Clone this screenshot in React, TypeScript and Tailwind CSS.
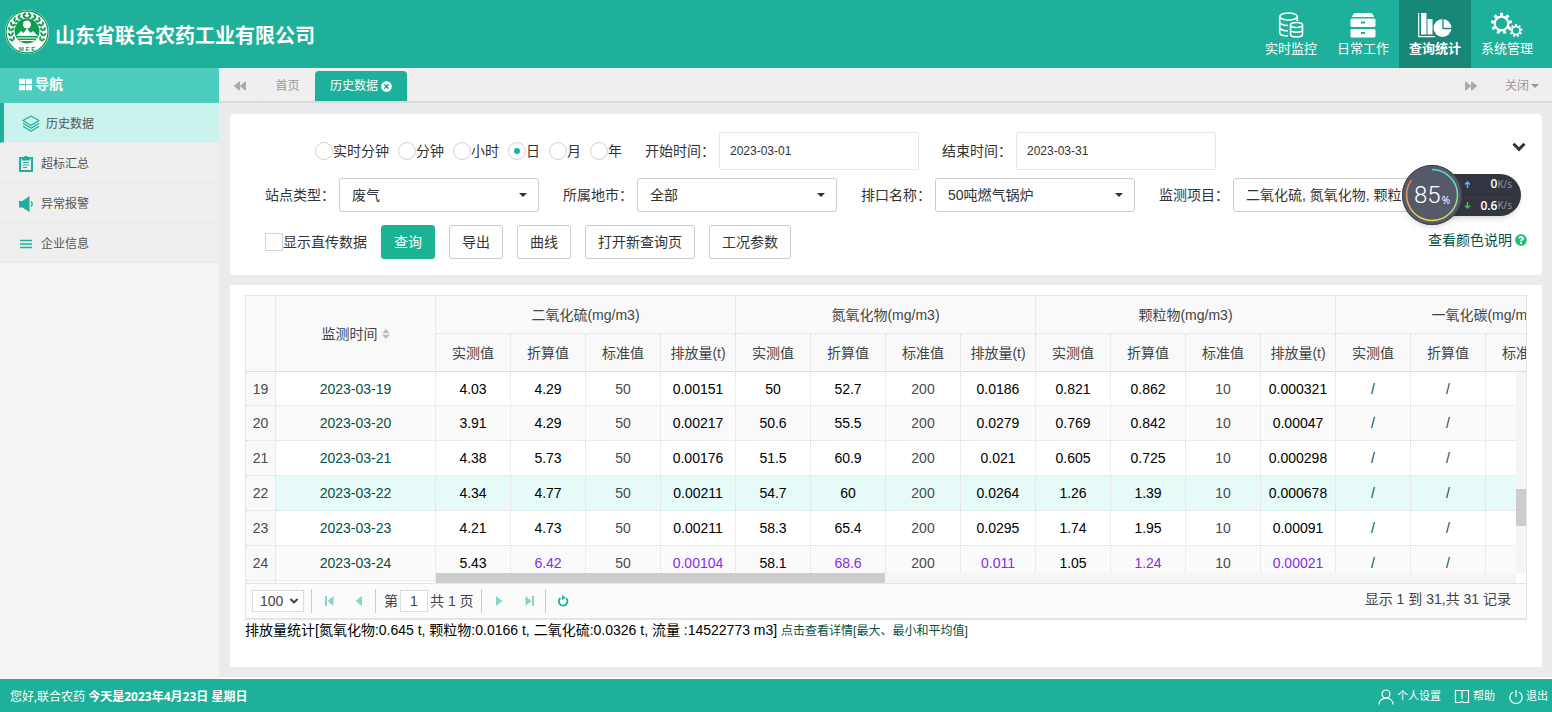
import React from 'react';
import { FaBackward, FaForward, FaTimesCircle, FaQuestionCircle, FaThLarge } from 'react-icons/fa';
import { ChevronDown } from 'lucide-react';

const GROUPS = ['二氧化硫(mg/m3)', '氮氧化物(mg/m3)', '颗粒物(mg/m3)', '一氧化碳(mg/m3)'];
const SUB_COLUMNS = ['实测值', '折算值', '标准值', '排放量(t)'];

type Row = { no: number; date: string; values: string[]; hover?: boolean; mark?: boolean };

const ROWS: Row[] = [
  { no: 19, date: '2023-03-19', values: ['4.03', '4.29', '50', '0.00151', '50', '52.7', '200', '0.0186', '0.821', '0.862', '10', '0.000321'] },
  { no: 20, date: '2023-03-20', values: ['3.91', '4.29', '50', '0.00217', '50.6', '55.5', '200', '0.0279', '0.769', '0.842', '10', '0.00047'] },
  { no: 21, date: '2023-03-21', values: ['4.38', '5.73', '50', '0.00176', '51.5', '60.9', '200', '0.021', '0.605', '0.725', '10', '0.000298'] },
  { no: 22, date: '2023-03-22', values: ['4.34', '4.77', '50', '0.00211', '54.7', '60', '200', '0.0264', '1.26', '1.39', '10', '0.000678'], hover: true },
  { no: 23, date: '2023-03-23', values: ['4.21', '4.73', '50', '0.00211', '58.3', '65.4', '200', '0.0295', '1.74', '1.95', '10', '0.00091'] },
  { no: 24, date: '2023-03-24', values: ['5.43', '6.42', '50', '0.00104', '58.1', '68.6', '200', '0.011', '1.05', '1.24', '10', '0.00021'], mark: true },
];

const rowBg = (row: Row) => {
  if (row.hover) return 'bg-[#e6faf8]';
  return row.no % 2 ? 'bg-white' : 'bg-[#fafafa]';
};

// Standard values are grey, corrected values and totals of a marked row are purple
const valueColor = (row: Row, i: number) => {
  if (i % 4 === 2) return 'text-[#4a4a4a]';
  if (row.mark && i % 4 !== 0) return 'text-[#8a2be2]';
  return 'text-black';
};

/* ---------- icons ---------- */

const Emblem = () => (
  <svg width="44" height="44" viewBox="0 0 44 44" aria-hidden="true">
    <circle cx="22" cy="22" r="22" fill="#fff" />
    <circle cx="22" cy="22" r="21" fill="none" stroke="#12984f" strokeWidth="1.3" />
    <circle cx="22" cy="21" r="12.5" fill="#0f9d4f" />
    {[-28, -10, 8, 26, 44, 62, 80].map((a) => (
      <g key={a} fill="#12984f">
        <ellipse cx="4.200" cy="21.500" rx="1.100" ry="2.300" transform={`rotate(${a} 22 22) rotate(-30 4.200 21.500)`} />
        <ellipse cx="7.200" cy="21.500" rx="1.100" ry="2.300" transform={`rotate(${a} 22 22) rotate(35 7.200 21.500)`} />
        <ellipse cx="39.800" cy="21.500" rx="1.100" ry="2.300" transform={`rotate(${-a} 22 22) rotate(30 39.800 21.500)`} />
        <ellipse cx="36.800" cy="21.500" rx="1.100" ry="2.300" transform={`rotate(${-a} 22 22) rotate(-35 36.800 21.500)`} />
      </g>
    ))}
    <circle cx="22" cy="14.500" r="3.900" fill="#fff" />
    <path d="M11 26l5-5 2.500 2L22 18.500l3.500 4.500 2.500-2 5 5z" fill="#fff" />
    <path d="M12.500 28h19M15 30.500h14" stroke="#fff" strokeWidth="1.100" />
    <text x="22" y="40.500" textAnchor="middle" fontSize="6" fontWeight="700" fill="#12984f" fontFamily="Liberation Sans">M E E</text>
  </svg>
);

const MonitorIcon = () => (
  <svg width="26" height="26" viewBox="0 0 26 26" fill="none" stroke="currentColor" strokeWidth="1.6" aria-hidden="true">
    <ellipse cx="10.500" cy="4.500" rx="8.800" ry="3.500" />
    <path d="M1.700 4.500v16c0 2 3.500 3.500 8.300 3.500M19.300 4.500v4.500M1.700 10c0 2 4 3.500 8.300 3.500M1.700 15.500c0 2 4 3.300 8.300 3.300" />
    <ellipse cx="18.500" cy="13" rx="6" ry="2.500" />
    <path d="M12.500 13v9.500c0 1.400 2.700 2.500 6 2.500s6-1.100 6-2.500V13M12.500 17.800c0 1.400 2.700 2.500 6 2.500s6-1.100 6-2.500" />
  </svg>
);

const DrawerIcon = () => (
  <svg width="26" height="26" viewBox="0 0 26 26" aria-hidden="true">
    <path d="M6 1h14q3 0 4 4H2q1-4 4-4z" fill="currentColor" />
    <rect x="0.500" y="6.500" width="25" height="8.500" rx="1.500" fill="currentColor" />
    <rect x="0.500" y="17" width="25" height="8.500" rx="1.500" fill="currentColor" />
    <path d="M11 10.500h4M11 21h4" stroke="#1eb09a" strokeWidth="1.800" />
  </svg>
);

const StatsIcon = () => (
  <svg width="34" height="26" viewBox="0 0 34 26" fill="currentColor" aria-hidden="true">
    <path d="M0.700 1v23.700H17" fill="none" stroke="currentColor" strokeWidth="1.200" />
    <rect x="3" y="1" width="5.500" height="21.500" />
    <rect x="9.500" y="7" width="5" height="15.500" />
    <circle cx="24.500" cy="16" r="9" />
    <path d="M25 6.500v10h9" fill="none" stroke="#178877" strokeWidth="1.300" />
  </svg>
);

const TEETH = [0, 40, 80, 120, 160, 200, 240, 280, 320];

const SettingsIcon = () => (
  <svg width="32" height="26" viewBox="0 0 32 26" fill="none" stroke="currentColor" aria-hidden="true">
    <circle cx="10.500" cy="11.500" r="6.800" strokeWidth="2.200" />
    {TEETH.map((a) => (
      <path key={a} d="M10.500 4V0.800" strokeWidth="3" transform={`rotate(${a} 10.500 11.500)`} />
    ))}
    <circle cx="25" cy="18.500" r="4" strokeWidth="1.700" />
    {TEETH.map((a) => (
      <path key={a} d="M25 14V12" strokeWidth="2" transform={`rotate(${a} 25 18.500)`} />
    ))}
  </svg>
);

const LayersIcon = () => (
  <svg width="18" height="18" viewBox="0 0 18 18" fill="none" stroke="currentColor" strokeWidth="1.200" strokeLinejoin="round" aria-hidden="true">
    <path d="M9 1l8 4.500-8 5-8-5z" />
    <path d="M1 8.300l8 5 8-5M1 11.300l8 5 8-5" />
  </svg>
);

const ClipboardIcon = () => (
  <svg width="14" height="16" viewBox="0 0 14 16" aria-hidden="true">
    <path d="M0 1h3v2h8V1h3v15H0z" fill="currentColor" />
    <path d="M2 3h10v11H2z" fill="#efefef" />
    <path d="M3 1h2.500V0h3v1H11v3.500H3z" fill="currentColor" />
    <path d="M4 6.500h6M4 9h6M4 11.500h4" stroke="currentColor" strokeWidth="1.200" />
  </svg>
);

const HornIcon = () => (
  <svg width="14" height="16" viewBox="0 0 14 16" aria-hidden="true">
    <path d="M0 5h3.500L10.500 0v16L3.500 11.500H0z" fill="currentColor" />
    <path d="M12 5.500q2.500 2.500 0 5" fill="none" stroke="currentColor" strokeWidth="1.300" />
  </svg>
);

const ListIcon = () => (
  <svg width="14" height="12" viewBox="0 0 14 12" aria-hidden="true">
    <path d="M1 2.500h12M1 6h12M1 9.500h12" stroke="currentColor" strokeWidth="1.400" />
  </svg>
);

const UserIcon = () => (
  <svg width="16" height="16" viewBox="0 0 16 16" fill="none" stroke="currentColor" strokeWidth="1.200" aria-hidden="true">
    <circle cx="8" cy="5" r="4" />
    <path d="M1 15.500c0-4 3-6.300 7-6.300s7 2.300 7 6.300" />
  </svg>
);

const BookIcon = () => (
  <svg width="16" height="16" viewBox="0 0 16 16" fill="none" stroke="currentColor" strokeWidth="1.200" aria-hidden="true">
    <path d="M6 13.500H1.500v-12h13v12H10M8 2v8M6 13.500l2-1 2 1" />
  </svg>
);

const PowerIcon = () => (
  <svg width="16" height="16" viewBox="0 0 16 16" fill="none" stroke="currentColor" strokeWidth="1.200" aria-hidden="true">
    <path d="M5 3a6.200 6.200 0 1 0 6 0M8 1v7" />
  </svg>
);

type PageArrowKind = 'first' | 'prev' | 'next' | 'last';

const ARROW_PATHS: Record<PageArrowKind, string> = {
  first: 'M2 1h2v10H2zM10.500 1v10L4.500 6z',
  prev: 'M9 1v10L2.500 6z',
  next: 'M3 1v10l6.500-5z',
  last: 'M9 1h2v10H9zM2.500 1v10l6-5z',
};

const PageArrow = ({ kind, label }: { kind: PageArrowKind; label: string }) => (
  <button type="button" aria-label={label} className="flex h-6 w-[30px] items-center justify-center text-[#85d6c8]">
    <svg width="12" height="12" viewBox="0 0 12 12" fill="currentColor" aria-hidden="true">
      <path d={ARROW_PATHS[kind]} />
    </svg>
  </button>
);

/* ---------- layout parts ---------- */

const NAV = [
  { label: '实时监控', icon: <MonitorIcon /> },
  { label: '日常工作', icon: <DrawerIcon /> },
  { label: '查询统计', icon: <StatsIcon />, active: true },
  { label: '系统管理', icon: <SettingsIcon /> },
];

const Header = () => (
  <header className="flex h-[68px] items-stretch justify-between bg-[#1eb09a] pl-[5px] pr-[9px] text-white">
    <div className="flex items-center gap-[6px] pb-1">
      <Emblem />
      <h1 className="pt-2 text-[20px] font-bold leading-6">山东省联合农药工业有限公司</h1>
    </div>
    <nav className="flex">
      {NAV.map((item) => (
        <a
          key={item.label}
          href="#"
          className={`flex w-[72px] flex-col items-center pt-3 text-[13px] leading-5 ${item.active ? 'bg-[#178877] font-bold' : ''}`}
        >
          {item.icon}
          {item.label}
        </a>
      ))}
    </nav>
  </header>
);

const MENU = [
  { label: '超标汇总', icon: <ClipboardIcon /> },
  { label: '异常报警', icon: <HornIcon /> },
  { label: '企业信息', icon: <ListIcon /> },
];

const Sidebar = () => (
  <aside className="w-[220px] shrink-0 border-r border-[#ebebeb] bg-[#f4f4f4]">
    <div className="flex h-[35px] items-center gap-[3px] bg-[#4dcdbd] pb-[3px] pl-[19px] text-sm font-bold text-white">
      <FaThLarge className="h-[13px] w-[13px]" />
      导航
    </div>
    <ul className="text-xs text-[#555]">
      <li>
        <a href="#" className="flex h-10 items-center gap-[6px] border-b border-l-4 border-b-[#e9e9e9] border-l-[#1eb09a] bg-[#c9f3ec] pl-[18px] pt-[2px]">
          <span className="text-[#1eb09a]"><LayersIcon /></span>
          历史数据
        </a>
      </li>
      {MENU.map((item) => (
        <li key={item.label}>
          <a href="#" className="flex h-10 items-center gap-2 border-b border-[#e9e9e9] bg-[#efefef] pl-[19px] pt-[2px]">
            <span className="text-[#1eb09a]">{item.icon}</span>
            {item.label}
          </a>
        </li>
      ))}
    </ul>
  </aside>
);

const TabBar = () => (
  <div className="flex h-[35px] items-end border-b-2 border-[#dadada] bg-[#efefef] text-xs text-[#999]">
    <button type="button" aria-label="向左" className="flex h-[30px] w-10 items-center justify-center border-r border-[#ebebeb] text-[#aaa]">
      <FaBackward className="h-3 w-3" />
    </button>
    <a href="#" className="flex h-[30px] w-[55px] items-center justify-center">首页</a>
    <div className="flex h-[30px] w-[92px] items-center justify-center gap-[3px] rounded-t bg-[#1eb09a] text-white">
      <a href="#">历史数据</a>
      <button type="button" aria-label="关闭标签"><FaTimesCircle className="h-[11px] w-[11px]" /></button>
    </div>
    <button type="button" aria-label="向右" className="ml-auto flex h-[30px] w-10 items-center justify-center text-[#aaa]">
      <FaForward className="h-3 w-3" />
    </button>
    <button type="button" className="flex h-[30px] items-center gap-[2px] pl-[14px] pr-[13px]">
      关闭
      <svg width="8" height="4" viewBox="0 0 8 4" aria-hidden="true">
        <path d="M0 0h8L4 4z" fill="currentColor" />
      </svg>
    </button>
  </div>
);

const PERIODS = ['实时分钟', '分钟', '小时', '日', '月', '年'];

const FILTERS = [
  { id: 'site', label: '站点类型：', value: '废气' },
  { id: 'city', label: '所属地市：', value: '全部' },
  { id: 'outlet', label: '排口名称：', value: '50吨燃气锅炉' },
  { id: 'item', label: '监测项目：', value: '二氧化硫, 氮氧化物, 颗粒物' },
];

const DateField = ({ id, label, value }: { id: string; label: string; value: string }) => (
  <div className="flex items-center">
    <label htmlFor={id} className="w-[74px]">{label}</label>
    <input id={id} type="text" defaultValue={value} className="h-[38px] w-[200px] rounded-[2px] border border-[#e6e6e6] px-[10px] text-xs" />
  </div>
);

const Filters = () => (
  <form className="relative rounded bg-white px-[35px] pb-4 pt-[18px] text-sm text-[#333]">
    <div className="flex items-center gap-[23px] pl-[50px]">
      <div className="flex gap-[9px]">
        {PERIODS.map((p) => (
          <label key={p} className="flex items-center">
            <input
              type="radio"
              name="period"
              defaultChecked={p === '日'}
              className="flex h-[18px] w-[18px] appearance-none items-center justify-center rounded-full border border-[#d2d2d2] before:hidden before:h-[6px] before:w-[6px] before:rounded-full before:bg-[#0fb9b1] checked:before:block"
            />
            {p}
          </label>
        ))}
      </div>
      <DateField id="start" label="开始时间：" value="2023-03-01" />
      <DateField id="end" label="结束时间：" value="2023-03-31" />
    </div>
    <div className="mt-2 flex gap-6">
      {FILTERS.map((f) => (
        <div key={f.id} className="flex shrink-0 items-center">
          <label htmlFor={f.id} className="w-[74px]">{f.label}</label>
          <div className="relative">
            <select id={f.id} className="h-[34px] w-[200px] appearance-none rounded-[3px] border border-[#ccc] bg-white pl-3 pr-6">
              <option>{f.value}</option>
            </select>
            <svg width="8" height="4" viewBox="0 0 8 4" className="pointer-events-none absolute right-3 top-[15px]" aria-hidden="true">
              <path d="M0 0h8L4 4z" fill="#333" />
            </svg>
          </div>
        </div>
      ))}
    </div>
    <div className="mt-[13px] flex items-center gap-[14px]">
      <label className="flex items-center">
        <input type="checkbox" className="h-[18px] w-[18px] appearance-none border border-[#d2d2d2]" />
        显示直传数据
      </label>
      <button type="button" className="h-[34px] rounded-[3px] border border-[#1ab394] bg-[#1ab394] px-3 text-white">查询</button>
      {['导出', '曲线', '打开新查询页', '工况参数'].map((b) => (
        <button key={b} type="button" className="h-[34px] rounded-[3px] border border-[#ccc] bg-white px-3">{b}</button>
      ))}
      <a href="#" className="-mr-5 ml-auto flex items-center gap-[3px] pb-1 text-[#054f44]">
        查看颜色说明
        <FaQuestionCircle className="h-3 w-3 text-[#1dbf73]" />
      </a>
    </div>
    <button type="button" aria-label="收起" className="absolute right-4 top-7">
      <svg width="14" height="10" viewBox="0 0 14 10" fill="none" stroke="#333" strokeWidth="3" aria-hidden="true">
        <path d="M1.500 1.800L7 7.300l5.500-5.500" />
      </svg>
    </button>
  </form>
);

const DataGrid = () => (
  <div className="border border-b-0 border-[#e5e5e5] text-sm">
    <div className="flex">
      {/* frozen columns */}
      <div className="h-[287px] shrink-0 overflow-hidden">
        <table className="w-[190px] table-fixed border-separate border-spacing-0 text-center">
          <colgroup>
            <col className="w-[30px]" />
            <col className="w-[160px]" />
          </colgroup>
          <thead>
            <tr className="h-[76px] bg-[#f9f9f9] text-[#444]">
              <th aria-label="序号" className="border-b border-r border-b-[#ddd] border-r-[#ddd] [border-right-style:dotted]" />
              <th className="border-b border-r border-b-[#ddd] border-r-[#ddd] font-normal [border-right-style:dotted]">
                <span className="inline-flex items-center gap-1">
                  监测时间
                  <svg width="8" height="10" viewBox="0 0 8 10" fill="#bbb" aria-hidden="true">
                    <path d="M0 4.300L4 0l4 4.300zM0 5.800h8L4 10z" />
                  </svg>
                </span>
              </th>
            </tr>
          </thead>
          <tbody>
            {ROWS.map((row) => (
              <tr key={row.no} className={`h-[35px] first:h-[34px] ${rowBg(row)}`}>
                <td className="border-b border-r border-dotted border-[#ddd] bg-[#f9f9f9] text-[#4a4a4a]">{row.no}</td>
                <td className="border-b border-r border-dotted border-[#ddd] text-[#054f44]">{row.date}</td>
              </tr>
            ))}
            <tr className="h-[35px]">
              <td className="border-r border-dotted border-[#ddd] bg-[#f9f9f9]" />
              <td className="border-r border-dotted border-[#ddd]" />
            </tr>
          </tbody>
        </table>
      </div>
      {/* scrolling columns */}
      <div className="flex h-[287px] min-w-0 flex-1 flex-col">
        <div className="relative min-h-0 flex-1 overflow-hidden">
          <table className="w-[1200px] table-fixed border-separate border-spacing-0 text-center">
            <thead className="bg-[#f9f9f9] text-[#444]">
              <tr className="h-[38px]">
                {GROUPS.map((g) => (
                  <th key={g} colSpan={4} className="border-b border-r border-dotted border-[#ddd] font-normal">{g}</th>
                ))}
              </tr>
              <tr className="h-[38px]">
                {GROUPS.map((g) =>
                  SUB_COLUMNS.map((s) => (
                    <th key={g + s} className="border-b border-r border-[#ddd] font-normal [border-right-style:dotted]">{s}</th>
                  ))
                )}
              </tr>
            </thead>
            <tbody>
              {ROWS.map((row) => (
                <tr key={row.no} className={`h-[35px] first:h-[34px] ${rowBg(row)}`}>
                  {row.values.map((v, i) => (
                    <td key={i} className={`border-b border-r border-dotted border-[#ddd] ${valueColor(row, i)}`}>{v}</td>
                  ))}
                  {SUB_COLUMNS.map((s) => (
                    <td key={s} className="border-b border-r border-dotted border-[#ddd] text-[#054f44]">/</td>
                  ))}
                </tr>
              ))}
            </tbody>
          </table>
          <div className="absolute bottom-0 right-0 top-[76px] w-[10px] bg-[#f5f5f5] pt-[117px]">
            <div className="h-[37px] bg-[#cdcdcf]" />
          </div>
        </div>
        <div className="mr-[10px] h-[10px] bg-[#f5f5f5]">
          <div className="h-full w-[449px] bg-[#cdcdcf]" />
        </div>
      </div>
    </div>
    <div className="flex h-[37px] items-center border-b-2 border-t border-[#e5e5e5] bg-[#fbfbfb] pl-[6px] pr-[15px] text-[#444]">
      <div className="relative">
        <select aria-label="每页条数" className="block h-[22px] w-[52px] appearance-none border border-[#ddd] bg-white pl-[7px] text-sm leading-5">
          <option>100</option>
        </select>
        <ChevronDown className="pointer-events-none absolute right-1 top-[5px] h-3 w-3" strokeWidth={4} />
      </div>
      <span className="ml-[7px] mr-[2px] h-6 w-px bg-[#ccc]" />
      <PageArrow kind="first" label="首页" />
      <PageArrow kind="prev" label="上一页" />
      <span className="ml-px mr-2 h-6 w-px bg-[#ccc]" />
      <label className="flex items-center gap-[2px]">
        第
        <input type="text" defaultValue="1" className="h-[22px] w-7 border border-[#ddd] bg-white text-center" />
        共 1 页
      </label>
      <span className="ml-[7px] mr-[2px] h-6 w-px bg-[#ccc]" />
      <PageArrow kind="next" label="下一页" />
      <PageArrow kind="last" label="末页" />
      <span className="mx-px h-6 w-px bg-[#ccc]" />
      <button type="button" aria-label="刷新" className="flex h-6 w-8 items-center justify-center text-[#1eb09a]">
        <svg width="12" height="12" viewBox="0 0 12 12" fill="none" stroke="currentColor" strokeWidth="1.800" aria-hidden="true">
          <path d="M3.500 3A4.300 4.300 0 1 0 9 3.200" />
          <path d="M5 0v5.400L8.500 2.500z" fill="currentColor" stroke="none" />
        </svg>
      </button>
      <span className="ml-auto pb-1">显示 1 到 31,共 31 记录</span>
    </div>
  </div>
);

const SpeedWidget = () => (
  <div className="absolute right-[31px] top-[165px] h-[60px] w-[119px] text-white">
    <div className="absolute right-0 top-[9px] flex h-[42px] w-[90px] flex-col rounded-r-full bg-[#333640] pl-[33px] pr-[9px] shadow-md">
      {[
        { value: '0', color: '#4db8ff', d: 'M3.500 7V1M1 3.500L3.500 1 6 3.500' },
        { value: '0.6', color: '#3cc14c', d: 'M3.500 0v6M1 3.500L3.500 6 6 3.500' },
      ].map((r) => (
        <div key={r.value} className="flex h-[21px] items-center border-b border-[#2a2d35] last:border-b-0">
          <svg width="7" height="7" viewBox="0 0 7 7" fill="none" stroke={r.color} strokeWidth="1.500" aria-hidden="true">
            <path d={r.d} />
          </svg>
          <b className="ml-auto text-xs font-semibold">{r.value}</b>
          <span className="text-[10px] text-[#999ca5]">K/s</span>
        </div>
      ))}
    </div>
    <div className="relative flex h-[60px] w-[60px] items-center justify-center gap-px rounded-full bg-[#565a68] shadow-md">
      <svg width="60" height="60" viewBox="0 0 60 60" fill="none" strokeWidth="1.500" className="absolute left-0 top-0" aria-hidden="true">
        <defs>
          <linearGradient id="ringRight" x1="0" y1="0" x2="0" y2="1">
            <stop offset="0" stopColor="#45e0d8" />
            <stop offset="0.500" stopColor="#6fe0b0" />
            <stop offset="1" stopColor="#e6dc4a" />
          </linearGradient>
          <linearGradient id="ringLeft" x1="0" y1="0" x2="0" y2="1">
            <stop offset="0" stopColor="#f06a6a" />
            <stop offset="1" stopColor="#ecd94a" />
          </linearGradient>
        </defs>
        <circle cx="30" cy="30" r="29.500" stroke="#3f424e" strokeWidth="1" />
        <path d="M30 4.500a25.500 25.500 0 0 1 0 51" stroke="url(#ringRight)" />
        <path d="M30 55.500A25.500 25.500 0 0 1 9.500 15" stroke="url(#ringLeft)" />
      </svg>
      <span className="font-[Roboto] text-[24px] font-light leading-none">85</span>
      <span className="self-end pb-[20px] text-[10px] leading-none">%</span>
    </div>
  </div>
);

const Footer = () => (
  <footer className="flex h-[33px] items-center justify-between bg-[#1eb09a] pl-[10px] pr-1 pt-[2px] text-xs text-white">
    <p>
      您好,联合农药 <b>今天是2023年4月23日 星期日</b>
    </p>
    <div className="flex items-center gap-[13px] text-[11px]">
      <a href="#" className="flex items-center gap-[3px]"><UserIcon />个人设置</a>
      <a href="#" className="flex items-center gap-[3px]"><BookIcon />帮助</a>
      <a href="#" className="flex items-center gap-[2px]"><PowerIcon />退出</a>
    </div>
  </footer>
);

const App: React.FC = () => {
  return (
    <div className="relative flex min-h-screen flex-col bg-white font-['Open_Sans','Noto_Sans_CJK_SC',sans-serif]">
      <Header />
      <div className="flex flex-1">
        <Sidebar />
        <main className="mb-[2px] flex min-w-0 flex-1 flex-col bg-[#ebebed]">
          <TabBar />
          <div className="flex flex-1 flex-col gap-[10px] p-[10px] pt-[11px] font-['Liberation_Sans','Noto_Sans_CJK_SC',sans-serif]">
            <Filters />
            <section className="flex-1 bg-white px-[15px] pt-[10px]">
              <DataGrid />
              <p className="text-sm leading-5 text-black">
                排放量统计[氮氧化物:0.645 t, 颗粒物:0.0166 t, 二氧化硫:0.0326 t, 流量 :14522773 m3]{' '}
                <a href="#" className="text-xs text-[#054f44]">点击查看详情[最大、最小和平均值]</a>
              </p>
            </section>
          </div>
        </main>
      </div>
      <Footer />
      <SpeedWidget />
    </div>
  );
};

export default App;
